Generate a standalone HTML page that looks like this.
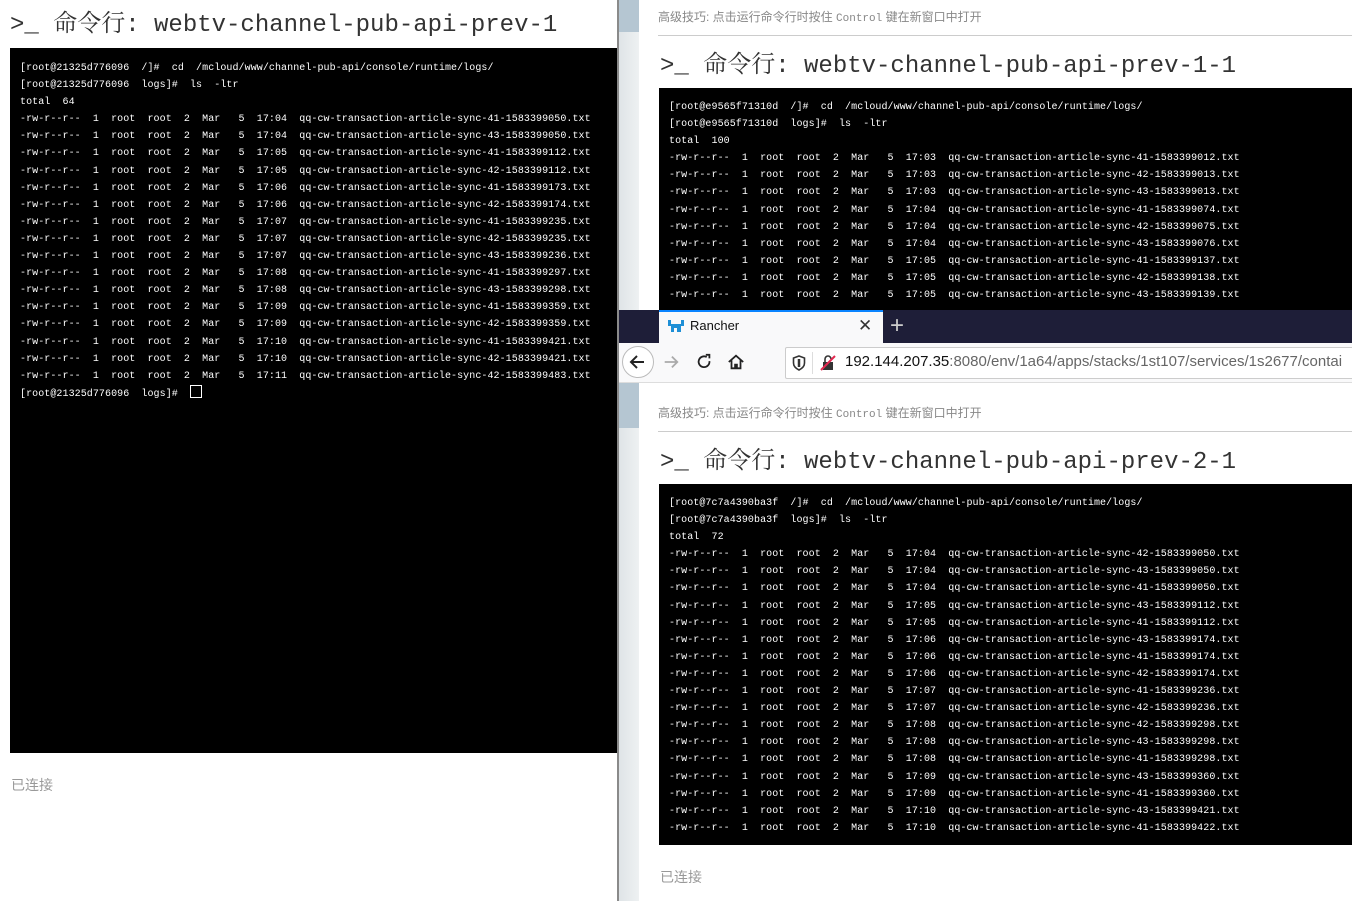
<!DOCTYPE html>
<html><head><meta charset="utf-8"><style>
body{margin:0;width:1352px;height:901px;position:relative;overflow:hidden;background:#fff;font-family:"Liberation Sans","Noto Sans CJK SC",sans-serif}
.a{position:absolute}
.term{position:absolute;background:#000;color:#fff;font-family:"Liberation Mono","Noto Sans CJK SC",monospace;font-size:10px;letter-spacing:0.07px;line-height:17.1px;white-space:pre;overflow:hidden}
.title{position:absolute;font-family:"Liberation Mono","Noto Serif CJK SC",monospace;font-size:24px;color:#333;white-space:pre}
.tip{position:absolute;font-size:12px;color:#888;white-space:pre;font-family:"Liberation Sans","Noto Sans CJK SC",sans-serif}
.tip span{font-family:"Liberation Mono",monospace;font-size:11px}
.conn{position:absolute;font-size:14px;color:#999;font-family:"Liberation Sans","Noto Sans CJK SC",sans-serif}
</style></head><body>
<!-- left window -->
<div class="title" style="left:10px;top:3px">&gt;_ 命令行: webtv-channel-pub-api-prev-1</div>
<div class="term" style="left:10px;top:48px;width:608px;height:705px;padding:12px 0 0 10px;box-sizing:border-box">[root@21325d776096  /]#  cd  /mcloud/www/channel-pub-api/console/runtime/logs/
[root@21325d776096  logs]#  ls  -ltr
total  64
-rw-r--r--  1  root  root  2  Mar   5  17:04  qq-cw-transaction-article-sync-41-1583399050.txt
-rw-r--r--  1  root  root  2  Mar   5  17:04  qq-cw-transaction-article-sync-43-1583399050.txt
-rw-r--r--  1  root  root  2  Mar   5  17:05  qq-cw-transaction-article-sync-41-1583399112.txt
-rw-r--r--  1  root  root  2  Mar   5  17:05  qq-cw-transaction-article-sync-42-1583399112.txt
-rw-r--r--  1  root  root  2  Mar   5  17:06  qq-cw-transaction-article-sync-41-1583399173.txt
-rw-r--r--  1  root  root  2  Mar   5  17:06  qq-cw-transaction-article-sync-42-1583399174.txt
-rw-r--r--  1  root  root  2  Mar   5  17:07  qq-cw-transaction-article-sync-41-1583399235.txt
-rw-r--r--  1  root  root  2  Mar   5  17:07  qq-cw-transaction-article-sync-42-1583399235.txt
-rw-r--r--  1  root  root  2  Mar   5  17:07  qq-cw-transaction-article-sync-43-1583399236.txt
-rw-r--r--  1  root  root  2  Mar   5  17:08  qq-cw-transaction-article-sync-41-1583399297.txt
-rw-r--r--  1  root  root  2  Mar   5  17:08  qq-cw-transaction-article-sync-43-1583399298.txt
-rw-r--r--  1  root  root  2  Mar   5  17:09  qq-cw-transaction-article-sync-41-1583399359.txt
-rw-r--r--  1  root  root  2  Mar   5  17:09  qq-cw-transaction-article-sync-42-1583399359.txt
-rw-r--r--  1  root  root  2  Mar   5  17:10  qq-cw-transaction-article-sync-41-1583399421.txt
-rw-r--r--  1  root  root  2  Mar   5  17:10  qq-cw-transaction-article-sync-42-1583399421.txt
-rw-r--r--  1  root  root  2  Mar   5  17:11  qq-cw-transaction-article-sync-42-1583399483.txt
[root@21325d776096  logs]#  <span style="display:inline-block;width:10px;height:11px;border:1px solid #fff;vertical-align:-2px"></span></div>
<div class="conn" style="left:11px;top:775px">已连接</div>
<div class="a" style="left:617px;top:0;width:2px;height:901px;background:#8a8a8a"></div>

<!-- right strip -->
<div class="a" style="left:619px;top:0;width:20px;height:901px;background:linear-gradient(90deg,#dfe4e7,#eef1f2)"></div>
<div class="a" style="left:619px;top:0;width:20px;height:32px;background:#b5c6d2"></div>
<div class="a" style="left:619px;top:383px;width:20px;height:45px;background:#b5c6d2"></div>

<!-- top right window -->
<div class="tip" style="left:658px;top:8px">高级技巧: 点击运行命令行时按住 <span>Control</span> 键在新窗口中打开</div>
<div class="a" style="left:658px;top:35px;width:694px;height:1px;background:#ccc"></div>
<div class="title" style="left:660px;top:44px">&gt;_ 命令行: webtv-channel-pub-api-prev-1-1</div>
<div class="term" style="left:659px;top:88px;width:693px;height:222px;padding:11px 0 0 10px;box-sizing:border-box">[root@e9565f71310d  /]#  cd  /mcloud/www/channel-pub-api/console/runtime/logs/
[root@e9565f71310d  logs]#  ls  -ltr
total  100
-rw-r--r--  1  root  root  2  Mar   5  17:03  qq-cw-transaction-article-sync-41-1583399012.txt
-rw-r--r--  1  root  root  2  Mar   5  17:03  qq-cw-transaction-article-sync-42-1583399013.txt
-rw-r--r--  1  root  root  2  Mar   5  17:03  qq-cw-transaction-article-sync-43-1583399013.txt
-rw-r--r--  1  root  root  2  Mar   5  17:04  qq-cw-transaction-article-sync-41-1583399074.txt
-rw-r--r--  1  root  root  2  Mar   5  17:04  qq-cw-transaction-article-sync-42-1583399075.txt
-rw-r--r--  1  root  root  2  Mar   5  17:04  qq-cw-transaction-article-sync-43-1583399076.txt
-rw-r--r--  1  root  root  2  Mar   5  17:05  qq-cw-transaction-article-sync-41-1583399137.txt
-rw-r--r--  1  root  root  2  Mar   5  17:05  qq-cw-transaction-article-sync-42-1583399138.txt
-rw-r--r--  1  root  root  2  Mar   5  17:05  qq-cw-transaction-article-sync-43-1583399139.txt</div>

<!-- browser chrome -->
<div class="a" style="left:619px;top:310px;width:733px;height:33px;background:#1e1e38"></div>
<div class="a" style="left:659px;top:310px;width:224px;height:33px;background:#f9f9fa;border-top:2px solid #0a84ff;box-sizing:border-box"></div>
<svg class="a" style="left:667px;top:318px" width="18" height="16" viewBox="0 0 18 16"><path d="M1 2h3v4h10V2h3v6h-3v6h-4v-4H7v4H4V8H1z" fill="#1e8fd6"/></svg>
<div class="a" style="left:690px;top:318px;font-size:13px;color:#111">Rancher</div>
<div class="a" style="left:858px;top:316px;font-size:17px;color:#333">✕</div>
<div class="a" style="left:890px;top:312px;font-size:24px;color:#ccc;font-weight:300">+</div>
<div class="a" style="left:619px;top:343px;width:733px;height:40px;background:#f9f9fa;border-bottom:1px solid #ddd;box-sizing:border-box"></div>
<div class="a" style="left:622px;top:346px;width:32px;height:32px;border:1px solid #bbb;border-radius:50%;background:#fff;box-sizing:border-box"></div>
<svg class="a" style="left:628px;top:352px" width="20" height="20" viewBox="0 0 20 20"><path d="M16 10H4M9 4l-6 6 6 6" stroke="#222" stroke-width="2" fill="none"/></svg>
<svg class="a" style="left:662px;top:353px" width="18" height="18" viewBox="0 0 20 20"><path d="M3 10h13M11 4l6 6-6 6" stroke="#aaa" stroke-width="2" fill="none"/></svg>
<svg class="a" style="left:695px;top:353px" width="18" height="18" viewBox="0 0 20 20"><path d="M16 9A6 6 0 1 1 13 4.5M12 2h4v4" stroke="#222" stroke-width="2" fill="none"/></svg>
<svg class="a" style="left:727px;top:353px" width="18" height="18" viewBox="0 0 20 20"><path d="M2 10L10 3l8 7M5 8v9h4v-4h2v4h4V8" stroke="#222" stroke-width="2" fill="none"/></svg>
<div class="a" style="left:785px;top:347px;width:580px;height:32px;background:#fff;border:1px solid #ccc;box-sizing:border-box;border-radius:2px"></div>
<svg class="a" style="left:792px;top:355px" width="14" height="16" viewBox="0 0 14 16"><path d="M7 1l5.5 2v5c0 3.5-2.5 5.5-5.5 7C4 13.5 1.5 11.5 1.5 8V3z" stroke="#333" stroke-width="1.6" fill="none"/><path d="M7 4v8" stroke="#333" stroke-width="2.5"/></svg>
<div class="a" style="left:812px;top:352px;width:1px;height:22px;background:#ddd"></div>
<svg class="a" style="left:820px;top:355px" width="16" height="16" viewBox="0 0 16 16"><rect x="3" y="7" width="10" height="8" fill="#333"/><path d="M5 7V4a3 3 0 0 1 6 0" stroke="#333" stroke-width="1.6" fill="none"/><path d="M1 15L15 1" stroke="#e22850" stroke-width="2"/></svg>
<div class="a" style="left:845px;top:353px;font-size:15px;color:#111;white-space:pre">192.144.207.35<span style="color:#666">:8080/env/1a64/apps/stacks/1st107/services/1s2677/contai</span></div>

<!-- bottom right window -->
<div class="tip" style="left:658px;top:404px">高级技巧: 点击运行命令行时按住 <span>Control</span> 键在新窗口中打开</div>
<div class="a" style="left:658px;top:431px;width:694px;height:1px;background:#ccc"></div>
<div class="title" style="left:660px;top:440px">&gt;_ 命令行: webtv-channel-pub-api-prev-2-1</div>
<div class="term" style="left:659px;top:484px;width:693px;height:361px;padding:11px 0 0 10px;box-sizing:border-box">[root@7c7a4390ba3f  /]#  cd  /mcloud/www/channel-pub-api/console/runtime/logs/
[root@7c7a4390ba3f  logs]#  ls  -ltr
total  72
-rw-r--r--  1  root  root  2  Mar   5  17:04  qq-cw-transaction-article-sync-42-1583399050.txt
-rw-r--r--  1  root  root  2  Mar   5  17:04  qq-cw-transaction-article-sync-43-1583399050.txt
-rw-r--r--  1  root  root  2  Mar   5  17:04  qq-cw-transaction-article-sync-41-1583399050.txt
-rw-r--r--  1  root  root  2  Mar   5  17:05  qq-cw-transaction-article-sync-43-1583399112.txt
-rw-r--r--  1  root  root  2  Mar   5  17:05  qq-cw-transaction-article-sync-41-1583399112.txt
-rw-r--r--  1  root  root  2  Mar   5  17:06  qq-cw-transaction-article-sync-43-1583399174.txt
-rw-r--r--  1  root  root  2  Mar   5  17:06  qq-cw-transaction-article-sync-41-1583399174.txt
-rw-r--r--  1  root  root  2  Mar   5  17:06  qq-cw-transaction-article-sync-42-1583399174.txt
-rw-r--r--  1  root  root  2  Mar   5  17:07  qq-cw-transaction-article-sync-41-1583399236.txt
-rw-r--r--  1  root  root  2  Mar   5  17:07  qq-cw-transaction-article-sync-42-1583399236.txt
-rw-r--r--  1  root  root  2  Mar   5  17:08  qq-cw-transaction-article-sync-42-1583399298.txt
-rw-r--r--  1  root  root  2  Mar   5  17:08  qq-cw-transaction-article-sync-43-1583399298.txt
-rw-r--r--  1  root  root  2  Mar   5  17:08  qq-cw-transaction-article-sync-41-1583399298.txt
-rw-r--r--  1  root  root  2  Mar   5  17:09  qq-cw-transaction-article-sync-43-1583399360.txt
-rw-r--r--  1  root  root  2  Mar   5  17:09  qq-cw-transaction-article-sync-41-1583399360.txt
-rw-r--r--  1  root  root  2  Mar   5  17:10  qq-cw-transaction-article-sync-43-1583399421.txt
-rw-r--r--  1  root  root  2  Mar   5  17:10  qq-cw-transaction-article-sync-41-1583399422.txt</div>
<div class="conn" style="left:660px;top:867px">已连接</div>
</body></html>
